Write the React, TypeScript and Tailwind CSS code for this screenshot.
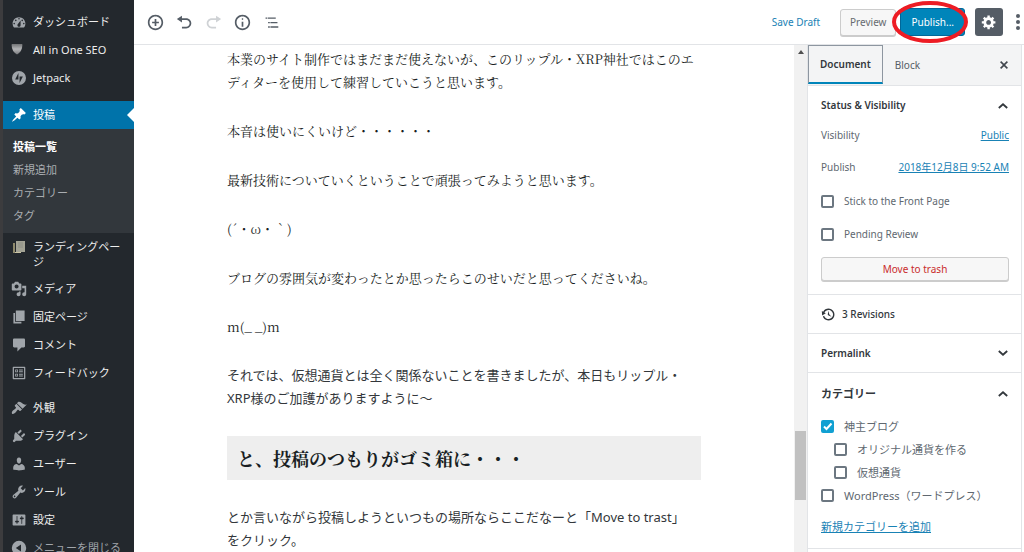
import React, { useState } from "react";

type IconProps = { d: string; className?: string; viewBox?: string };

function Icon({ d, className = "size-4", viewBox = "0 0 20 20" }: IconProps) {
  return (
    <svg viewBox={viewBox} className={`${className} shrink-0`} fill="currentColor" fillRule="evenodd" aria-hidden="true">
      <path d={d} />
    </svg>
  );
}

const icons = {
  dashboard:
    "M3.76 17h12.48c1.1-1.37 1.76-3.11 1.76-5 0-4.42-3.58-8-8-8s-8 3.58-8 8c0 1.89.66 3.63 1.76 5zM10 5c.55 0 1 .45 1 1s-.45 1-1 1-1-.45-1-1 .45-1 1-1zM6 7c.55 0 1 .45 1 1s-.45 1-1 1-1-.45-1-1 .45-1 1-1zm8 0c.55 0 1 .45 1 1s-.45 1-1 1-1-.45-1-1 .45-1 1-1zm-5.37 5.55L12 8v6c0 1.1-.9 2-2 2s-2-.9-2-2c0-.57.24-1.08.63-1.45zM4 11c.55 0 1 .45 1 1s-.45 1-1 1-1-.45-1-1 .45-1 1-1zm12 0c.55 0 1 .45 1 1s-.45 1-1 1-1-.45-1-1 .45-1 1-1z",
  post: "M10.44 3.02l1.82-1.82 6.36 6.35-1.83 1.82c-1.05-.68-2.48-.57-3.41.36l-.75.75c-.92.93-1.04 2.35-.35 3.41l-1.83 1.82-2.41-2.41-2.8 2.79c-.42.42-3.38 2.71-3.8 2.29s1.86-3.39 2.28-3.81l2.79-2.79L4.1 9.36l1.83-1.82c1.05.69 2.48.57 3.4-.36l.75-.75c.93-.92 1.05-2.35.36-3.41z",
  page: "M6 15V2h11v13H6zm-1 1h8v2H3V5h2v11z",
  media:
    "M13 11V4c0-.55-.45-1-1-1h-1.67L9 1H5L3.67 3H2c-.55 0-1 .45-1 1v7c0 .55.45 1 1 1h10c.55 0 1-.45 1-1zM7 4.5c1.38 0 2.5 1.12 2.5 2.5S8.38 9.5 7 9.5 4.5 8.38 4.5 7 5.62 4.5 7 4.5zM14 6h5v10.5c0 1.38-1.12 2.5-2.5 2.5S14 17.88 14 16.5s1.12-2.5 2.5-2.5c.17 0 .34.02.5.05V9h-3V6zm-4 8.05V13h2v3.5c0 1.38-1.12 2.5-2.5 2.5S7 17.88 7 16.5 8.12 14 9.5 14c.17 0 .34.02.5.05z",
  comments:
    "M4 2h12c.8 0 1.5.7 1.5 1.500v8c0 .8-.7 1.500-1.500 1.500h-3l-5 5v-5H4c-.8 0-1.500-.7-1.500-1.500v-8C2.500 2.700 3.200 2 4 2z",
  feedback:
    "M2 1h16c.55 0 1 .45 1 1v16c0 .55-.45 1-1 1H2c-.55 0-1-.45-1-1V2c0-.55.45-1 1-1zm.8 1.800v14.400h14.400V2.800H2.800zM4.500 5h4v4h-4V5zm1.200 1.200v1.600h1.600V6.200H5.700zM10 5h5.500v1.500H10V5zm0 2.500h5.500V9H10V7.500zM4.500 11h4v4h-4v-4zm1.200 1.200v1.600h1.600v-1.600H5.700zM10 11h5.500v1.500H10V11zm0 2.500h5.500V15H10v-1.500z",
  appearance:
    "M14.48 11.06L7.41 3.99l1.5-1.5c.5-.56 2.3-.47 3.51.32 1.21.8 1.43 1.28 2.91 2.1 1.18.64 2.45 1.26 4.45.85zm-.71.71L6.7 4.7 4.93 6.47c-.39.39-.39 1.02 0 1.41l1.06 1.06c.39.39.39 1.03 0 1.42-.6.6-1.43 1.11-2.21 1.69-.35.26-.7.53-1.01.84C1.43 14.23.4 16.08 1.4 17.07c.99 1 2.84-.03 4.18-1.36.31-.31.58-.66.85-1.02.57-.78 1.08-1.61 1.69-2.21.39-.39 1.02-.39 1.41 0l1.06 1.06c.39.39 1.02.39 1.41 0z",
  plugins:
    "M13.11 4.36L9.87 7.6 8 5.73l3.24-3.24c.35-.34 1.05-.2 1.56.32.52.51.66 1.21.31 1.55zm-8 1.77l.91-1.12 9.01 9.01-1.19.84c-.71.71-2.63 1.16-3.82 1.16H6.14L4.9 17.26c-.59.59-1.54.59-2.12 0-.59-.58-.59-1.53 0-2.12l1.24-1.24v-3.88c0-1.13.4-3.19 1.09-3.89zm7.26 3.97l3.24-3.24c.34-.35 1.04-.21 1.55.31.52.51.66 1.21.31 1.55l-3.24 3.25z",
  users:
    "M10 9.25c-2.27 0-2.73-3.44-2.73-3.44C7 4.02 7.82 2 9.97 2c2.16 0 2.98 2.02 2.71 3.81 0 0-.41 3.44-2.68 3.44zm0 2.57L12.72 10c2.39 0 4.52 2.33 4.52 4.53v2.49s-3.65 1.13-7.24 1.13c-3.65 0-7.24-1.13-7.24-1.13v-2.49c0-2.25 1.94-4.48 4.47-4.48z",
  tools:
    "M16.68 9.77c-1.34 1.34-3.3 1.67-4.95.99l-5.41 6.52c-.99.99-2.59.99-3.58 0s-.99-2.59 0-3.57l6.52-5.42c-.68-1.65-.35-3.61.99-4.95 1.28-1.28 3.12-1.62 4.72-1.06l-2.89 2.89 2.82 2.82 2.86-2.87c.53 1.58.18 3.39-1.08 4.65zM3.81 16.21c.4.39 1.04.39 1.43 0 .4-.4.4-1.04 0-1.43-.39-.4-1.03-.4-1.43 0-.39.39-.39 1.03 0 1.43z",
  settings:
    "M18 16V4c0-.55-.45-1-1-1H3c-.55 0-1 .45-1 1v12c0 .55.45 1 1 1h14c.55 0 1-.45 1-1zM8 11h1c.55 0 1 .45 1 1s-.45 1-1 1H8v1.5c0 .28-.22.5-.5.5s-.5-.22-.5-.5V13H6c-.55 0-1-.45-1-1s.45-1 1-1h1V5.500c0-.28.22-.5.5-.5s.5.22.5.5V11zm5-2h-1c-.55 0-1-.45-1-1s.45-1 1-1h1V5.500c0-.28.22-.5.5-.5s.5.22.5.5V7h1c.55 0 1 .45 1 1s-.45 1-1 1h-1v5.500c0 .28-.22.5-.5.5s-.5-.22-.5-.5V9z",
  collapse: "M10 1a9 9 0 1 0 0 18a9 9 0 1 0 0-18zM12.500 5.500v9L6 10z",
  jetpack: "M10 0a10 10 0 1 0 0 20a10 10 0 1 0 0-20zM9.200 3v9.200H4.500zM10.800 17V7.800h4.700z",
  gear: "M18 12h-2.180c-.17.7-.44 1.350-.81 1.930l1.540 1.540-2.100 2.100-1.540-1.540c-.58.36-1.230.63-1.910.79V19H8v-2.180c-.68-.16-1.330-.43-1.910-.79l-1.540 1.540-2.120-2.120 1.540-1.540c-.36-.58-.63-1.230-.79-1.910H1V9.030h2.170c.16-.7.44-1.350.8-1.940L2.430 5.550l2.100-2.100 1.540 1.540c.58-.37 1.240-.64 1.930-.81V2h3v2.180c.68.16 1.330.43 1.910.79l1.540-1.540 2.120 2.120-1.540 1.540c.36.59.64 1.240.8 1.940H18V12zm-8.500 1.500c1.660 0 3-1.340 3-3s-1.340-3-3-3-3 1.340-3 3 1.340 3 3 3z",
  insert: "M10 1c-5 0-9 4-9 9s4 9 9 9 9-4 9-9-4-9-9-9zm0 16c-3.900 0-7-3.100-7-7s3.100-7 7-7 7 3.100 7 7-3.100 7-7 7zm1-11H9v3H6v2h3v3h2v-3h3V9h-3V6z",
  undo: "M12 5H7V2L1 6l6 4V7h5c2.200 0 4 1.800 4 4s-1.800 4-4 4H7v2h5c3.300 0 6-2.700 6-6s-2.700-6-6-6z",
  redo: "M8 5h5V2l6 4-6 4V7H8c-2.200 0-4 1.800-4 4s1.800 4 4 4h5v2H8c-3.300 0-6-2.700-6-6s2.700-6 6-6z",
  info: "M9 15h2V9H9v6zm1-10c-.5 0-1 .5-1 1s.5 1 1 1 1-.5 1-1-.5-1-1-1zm0-4c-5 0-9 4-9 9s4 9 9 9 9-4 9-9-4-9-9-9zm0 16c-3.900 0-7-3.100-7-7s3.100-7 7-7 7 3.100 7 7-3.100 7-7 7z",
  outline: "M3 4h2v1.700H3V4zm2.700 0H15v1.700H5.700V4zM6 9.300h2V11H6V9.300zm2.700 0h8.300V11H8.700V9.300zM6 14.500h2v1.700H6v-1.700zm2.700 0H18v1.700H8.700v-1.700z",
  backup:
    "M13.65 2.88c3.93 2.01 5.48 6.84 3.47 10.77s-6.83 5.48-10.77 3.47c-1.87-.96-3.2-2.56-3.86-4.4l1.64-1.03c.45 1.57 1.52 2.95 3.08 3.76 3.01 1.54 6.69.35 8.23-2.66 1.55-3.01.36-6.69-2.65-8.24C9.78 3.01 6.1 4.2 4.56 7.21l1.88.97-4.95 3.08-.39-5.82 1.78.91C4.9 2.4 9.75.89 13.65 2.88zm-4.36 7.83C9.11 10.53 9 10.28 9 10c0-.07.03-.12.04-.19h-.01L10 5l.97 4.81L14 13l-4.5-2.12.02-.02c-.08-.04-.16-.09-.23-.15z",
  close: "M14.950 6.460L11.410 10l3.540 3.540-1.410 1.410L10 11.420l-3.530 3.530-1.420-1.420L8.580 10 5.050 6.470l1.420-1.420L10 8.580l3.540-3.530z",
  up: "M10 5l8 7-2 2.500-6-5.500-6 5.500-2-2.500z",
  down: "M10 15l8-7-2-2.500-6 5.500-6-5.500-2 2.500z",
};

function Shield() {
  return (
    <svg viewBox="0 0 16 16" className="mr-1 size-3 shrink-0" aria-hidden="true">
      <defs>
        <linearGradient id="shield" x1="0" y1="0" x2="0" y2="1">
          <stop offset="0" stopColor="#6c6e70" />
          <stop offset=".5" stopColor="#b4b5b7" />
          <stop offset="1" stopColor="#77797c" />
        </linearGradient>
      </defs>
      <path d="M1 0Q8-1 15 0Q16 9 8 14Q0 9 1 0z" fill="url(#shield)" />
    </svg>
  );
}

function LandingIcon() {
  return (
    <svg viewBox="0 0 16 16" className="size-4 shrink-0" aria-hidden="true">
      <path d="M2 4h2v10H2z" fill="#8f8a6c" />
      <path d="M5 2h9v11H5z" fill="#a3a395" />
      <path d="M4 13h6v1H4z" fill="#c9c4a4" />
      <path d="M7 4h5M7 6h5M7 8h5" stroke="#8d8f85" />
    </svg>
  );
}

function MenuItem({ icon, label, muted = false }: { icon: React.ReactNode; label: string; muted?: boolean }) {
  return (
    <li>
      <a href="#" className={`flex min-h-7 items-start gap-[6px] pl-2 pr-1 ${muted ? "text-[#a0a5aa]" : "text-[#eeeeee]"}`}>
        <span className="flex h-7 w-4 shrink-0 items-center text-[#a0a5aa]">{icon}</span>
        <span className="py-[6px] text-[11px] leading-[15px]">{label}</span>
      </a>
    </li>
  );
}

function AdminMenu() {
  return (
    <nav className="w-[134px] shrink-0 overflow-hidden border-l-[3px] border-[#3c3c3e] bg-[#23282d] pt-2">
      <ul>
        <MenuItem icon={<Icon d={icons.dashboard} />} label="ダッシュボード" />
        <MenuItem icon={<Shield />} label="All in One SEO" />
        <MenuItem icon={<Icon d={icons.jetpack} className="ml-px size-[14px]" />} label="Jetpack" />
      </ul>
      <div className="mt-[9px] bg-[#32373c]">
        <a href="#" className="relative flex h-7 items-center gap-[6px] bg-[#0073aa] pl-2 text-[11px] text-white">
          <Icon d={icons.post} />
          投稿
          <span className="absolute right-0 border-y-[7px] border-r-[7px] border-y-transparent border-r-white" />
        </a>
        <ul className="px-[10px] pt-[6px] pb-[6px] text-[11px] leading-[23px] text-[#a9adb1]">
          <li><a href="#" className="font-bold text-white">投稿一覧</a></li>
          <li><a href="#">新規追加</a></li>
          <li><a href="#">カテゴリー</a></li>
          <li><a href="#">タグ</a></li>
        </ul>
      </div>
      <ul>
        <MenuItem icon={<LandingIcon />} label="ランディングページ" />
        <MenuItem icon={<Icon d={icons.media} />} label="メディア" />
        <MenuItem icon={<Icon d={icons.page} />} label="固定ページ" />
        <MenuItem icon={<Icon d={icons.comments} />} label="コメント" />
        <MenuItem icon={<Icon d={icons.feedback} className="ml-px size-[14px]" />} label="フィードバック" />
      </ul>
      <ul className="mt-[7px]">
        <MenuItem icon={<Icon d={icons.appearance} />} label="外観" />
        <MenuItem icon={<Icon d={icons.plugins} />} label="プラグイン" />
        <MenuItem icon={<Icon d={icons.users} />} label="ユーザー" />
        <MenuItem icon={<Icon d={icons.tools} />} label="ツール" />
        <MenuItem icon={<Icon d={icons.settings} />} label="設定" />
        <MenuItem icon={<Icon d={icons.collapse} />} label="メニューを閉じる" muted />
      </ul>
    </nav>
  );
}

function Toolbar() {
  return (
    <header className="flex h-[45px] shrink-0 items-center justify-between border-b border-[#e2e4e7] pl-[13px]">
      <div className="flex items-center gap-3 text-[#555d66]">
        <button aria-label="Add block"><Icon d={icons.insert} className="size-[17px]" /></button>
        <button aria-label="Undo"><Icon d={icons.undo} className="size-[17px]" /></button>
        <button aria-label="Redo" className="text-[#cfd2d5]"><Icon d={icons.redo} className="size-[17px]" /></button>
        <button aria-label="Content structure"><Icon d={icons.info} className="size-[17px]" /></button>
        <button aria-label="Block navigation"><Icon d={icons.outline} className="size-[17px]" /></button>
      </div>
      <div className="flex items-center text-[10px]">
        <button className="mr-5 text-[#1982b5]">Save Draft</button>
        <button className="h-[27px] rounded-[3px] border border-[#cccccc] bg-[#f7f7f7] px-[9px] text-[#666b70] shadow-[0_1px_0_#ccc]">Preview</button>
        <div className="relative ml-1">
          <button className="h-7 rounded-[3px] border border-[#006799] bg-[#0085ba] px-[10px] text-white">Publish...</button>
          <svg viewBox="0 0 76 42" className="pointer-events-none absolute -left-2 -top-[7px] h-[42px] w-[76px]" fill="none" aria-hidden="true">
            <ellipse cx="38" cy="21" rx="36" ry="19" stroke="#ed1c24" strokeWidth="4" />
          </svg>
        </div>
        <button aria-label="Settings" className="ml-[10px] flex size-7 items-center justify-center rounded-[3px] bg-[#555d66] text-white">
          <Icon d={icons.gear} className="size-4" />
        </button>
        <button aria-label="More tools" className="ml-[13px] mr-1 text-[#555d66]">
          <svg viewBox="0 0 4 16" className="h-4 w-1" fill="currentColor" aria-hidden="true">
            <circle cx="2" cy="2" r="2" /><circle cx="2" cy="8" r="2" /><circle cx="2" cy="14" r="2" />
          </svg>
        </button>
      </div>
    </header>
  );
}

const serif = "font-['Noto_Serif_CJK_JP','Noto_Serif_JP','Liberation_Serif','Noto_Sans_CJK_JP',serif]";

function Editor() {
  return (
    <main className="min-w-0 flex-1 overflow-hidden px-6 pt-[2px] text-[#191e23]">
      <article className="mx-auto flex max-w-[474px] flex-col gap-[26px] text-[13px] leading-[23px]">
        <p className={serif}>本業のサイト制作ではまだまだ使えないが、このリップル・XRP神社ではこのエディターを使用して練習していこうと思います。</p>
        <p className={serif}>本音は使いにくいけど・・・・・・</p>
        <p className={serif}>最新技術についていくということで頑張ってみようと思います。</p>
        <p className={serif}>(´・ω・｀)</p>
        <p className={serif}>ブログの雰囲気が変わったとか思ったらこのせいだと思ってくださいね。</p>
        <p className={serif}>m(_ _)m</p>
        <p className="text-[#33373b]">それでは、仮想通貨とは全く関係ないことを書きましたが、本日もリップル・XRP様のご加護がありますように～</p>
        <h2 className={`${serif} bg-[#eeeeee] px-[10px] text-lg leading-[44px] font-bold`}>と、投稿のつもりがゴミ箱に・・・</h2>
        <p className="text-[#33373b]">とか言いながら投稿しようといつもの場所ならここだなーと「Move to trast」<br />をクリック。</p>
      </article>
    </main>
  );
}

function ScrollTrack() {
  return (
    <div className="relative w-[13px] shrink-0 bg-[#f1f1f1]" aria-hidden="true">
      <span className="absolute left-[4px] top-[5px] border-x-[3px] border-b-[4px] border-x-transparent border-b-[#505050]" />
      <span className="absolute left-[1px] top-[70%] h-[69px] w-[11px] mt-[31px] bg-[#c1c1c1]" />
    </div>
  );
}

function Check({ label, checked = false, className = "" }: { label: string; checked?: boolean; className?: string }) {
  const [on, setOn] = useState(checked);
  return (
    <label className={`flex items-center gap-[10px] ${className}`}>
      <span className="relative flex size-[13px] shrink-0">
        <input
          type="checkbox"
          checked={on}
          onChange={() => setOn(!on)}
          className="size-[13px] appearance-none rounded-[2px] border-2 border-[#6c7781] bg-white checked:border-[#11a0d2] checked:bg-[#11a0d2]"
        />
        {on && (
          <svg viewBox="0 0 13 13" className="pointer-events-none absolute inset-0" fill="none" stroke="white" strokeWidth="2" aria-hidden="true">
            <path d="M3 6.500L5.500 9L10.500 3.500" />
          </svg>
        )}
      </span>
      {label}
    </label>
  );
}

function PanelTitle({ label, open, className = "" }: { label: string; open: boolean; className?: string }) {
  return (
    <button className={`flex w-full items-center justify-between font-semibold text-[#32373c] ${className}`}>
      {label}
      <Icon d={open ? icons.up : icons.down} className="size-3" />
    </button>
  );
}

function Sidebar() {
  return (
    <aside className="mr-[2px] flex w-[215px] shrink-0 flex-col border-x border-[#e2e4e7] bg-white text-[10px] text-[#606870]">
      <div className="flex h-[41px] shrink-0 items-stretch border-b border-[#e2e4e7] bg-[#f3f4f5]">
        <button className="mb-px border border-b-2 border-[#8d96a0] border-b-[#0085ba] px-[11px] font-semibold text-[#32373c]">Document</button>
        <button className="px-3 text-[#555d66]">Block</button>
        <button aria-label="Close settings" className="ml-auto mr-[9px] text-[#40464d]"><Icon d={icons.close} className="size-4" /></button>
      </div>
      <section className="border-b border-[#e2e4e7] pr-3 pb-[13px] pl-[13px]">
        <PanelTitle label="Status & Visibility" open className="h-[39px]" />
        <div className="flex h-[21px] items-center justify-between">
          <span>Visibility</span>
          <a href="#" className="text-[#1982b5] underline">Public</a>
        </div>
        <div className="mt-[10px] flex h-[22px] items-center justify-between">
          <span>Publish</span>
          <a href="#" className="text-[#1982b5] underline">2018年12月8日 9:52 AM</a>
        </div>
        <Check label="Stick to the Front Page" className="mt-3 h-[22px]" />
        <Check label="Pending Review" className="mt-[11px] h-[22px]" />
        <button className="mt-3 h-6 w-full rounded-[3px] border border-[#cccccc] bg-[#f7f7f7] text-[#c92c2c] shadow-[0_1px_0_#ccc]">Move to trash</button>
      </section>
      <section className="border-b border-[#e2e4e7] pr-3 pl-[13px]">
        <button className="flex h-[38px] items-center gap-[6px] font-medium text-[#32373c]">
          <Icon d={icons.backup} className="size-[15px]" />
          3 Revisions
        </button>
      </section>
      <section className="border-b border-[#e2e4e7] pr-3 pl-[13px]">
        <PanelTitle label="Permalink" open={false} className="h-[38px]" />
      </section>
      <section className="border-b border-[#e2e4e7] pr-3 pb-[10px] pl-[13px] text-[11px]">
        <PanelTitle label="カテゴリー" open className="h-[42px]" />
        <div className="leading-[23px]">
          <Check label="神主ブログ" checked />
          <Check label="オリジナル通貨を作る" className="ml-[13px]" />
          <Check label="仮想通貨" className="ml-[13px]" />
          <Check label="WordPress（ワードプレス）" />
        </div>
        <a href="#" className="mt-2 block leading-[23px] text-[#1982b5] underline">新規カテゴリーを追加</a>
      </section>
    </aside>
  );
}

export default function App() {
  return (
    <div className="flex h-screen overflow-hidden bg-white font-['Noto_Sans','Noto_Sans_CJK_JP',sans-serif]">
      <AdminMenu />
      <div className="flex min-w-0 flex-1 flex-col">
        <Toolbar />
        <div className="flex min-h-0 flex-1">
          <Editor />
          <ScrollTrack />
          <Sidebar />
        </div>
      </div>
    </div>
  );
}
